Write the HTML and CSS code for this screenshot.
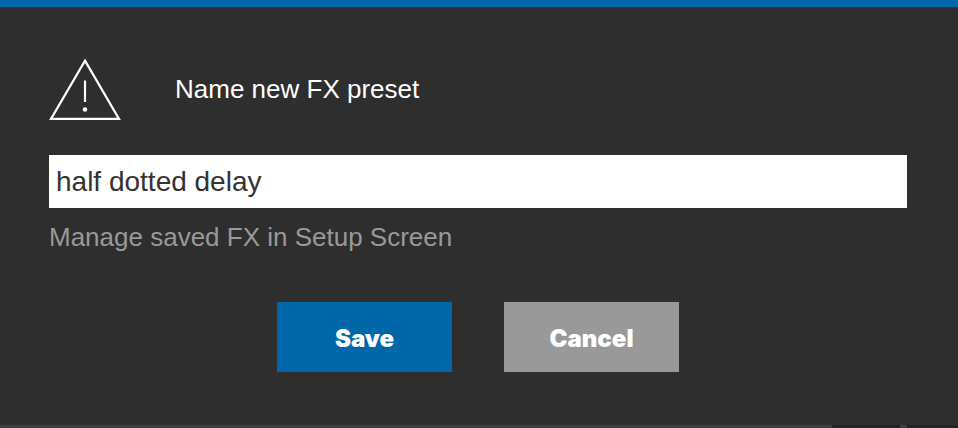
FILE: index.html
```html
<!DOCTYPE html>
<html lang="en">
<head>
  <meta charset="UTF-8">
  <meta name="viewport" content="width=device-width, initial-scale=1.0">
  <title>Name new FX preset</title>
  <link rel="stylesheet" href="styles.css">
</head>
<body>
  <form class="dialog">
    <div class="header">
      <svg class="warning" viewBox="0 0 72 64" fill="none" stroke="#fff" aria-hidden="true">
        <path d="M36 3.6 L70 61.9 H2 Z" stroke-width="2.2"/>
        <path d="M36 23.5 V45" stroke-width="2.2"/>
        <circle cx="36" cy="52.5" r="2.3" fill="#fff" stroke="none"/>
      </svg>
      <label for="preset">Name new FX preset</label>
    </div>

    <input type="text" id="preset" value="half dotted delay">
    <p class="hint">Manage saved FX in Setup Screen</p>

    <div class="buttons">
      <button type="button" class="save">Save</button>
      <button type="button" class="cancel">Cancel</button>
    </div>
  </form>

  <div class="screen-edge">
    <span class="panel"></span>
    <span class="panel last"></span>
  </div>
</body>
</html>
```

FILE: styles.css
```css
* { box-sizing: border-box; }
html { height: 100%; }
body { display: flex; flex-direction: column; min-height: 100%; margin: 0; background: #2e2e2e; font-family: Arial, "Liberation Sans", sans-serif; font-size: 26px; }
.dialog { flex: 1; padding: 50px 51px 52px 49px; border-top: 7px solid #0067a9; }
.header { display: flex; align-items: center; gap: 54px; color: #fff; }
.warning { width: 72px; height: 64px; }
input { display: block; width: 100%; height: 53px; margin-top: 34px; padding: 0 7px; border: 0; border-radius: 0; outline: 0; background: #fff; color: #333; font-family: inherit; font-size: 28px; }
.hint { margin: 14px 0 0; line-height: 30px; color: #999; }
.buttons { display: flex; justify-content: center; gap: 52px; margin-top: 50px; }
button { width: 175px; height: 70px; padding: 2px 0 0; border: 0; color: #fff; font-family: "Arial Black", Inter, sans-serif; font-size: 24px; font-weight: 900; cursor: pointer; }
.save { background: #0067a9; }
.cancel { background: #999; }
.screen-edge { display: flex; justify-content: flex-end; gap: 7px; height: 3px; background: #3f3d3e; }
.panel { width: 68px; background: #262425; }
.last { width: 51px; }
```
